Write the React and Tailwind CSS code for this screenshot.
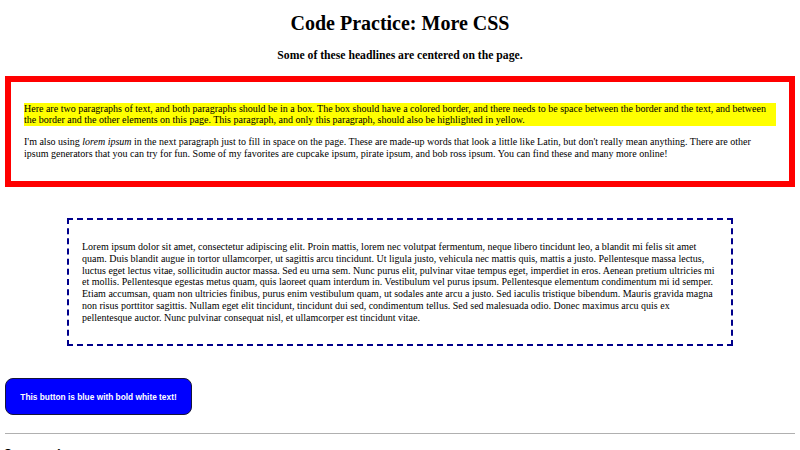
export default function App() {
  return (
    <div className="w-[800px] h-[450px] overflow-hidden bg-white text-black px-[5px] font-['Liberation_Serif',serif]">
      <h1 className="mt-[12px] text-center text-[20px] leading-[23px] font-bold">Code Practice: More CSS</h1>
      <h3 className="mt-[14px] text-center text-[11.7px] leading-[13.5px] font-bold">Some of these headlines are centered on the page.</h3>

      <div className="mt-[13px] border-[6px] border-[#ff0000] px-[13px] pt-[21px] pb-[22px] flex flex-col gap-[10px] text-[10px] leading-[11.7px]">
        <p className="bg-[#ffff00]">
          Here are two paragraphs of text, and both paragraphs should be in a box. The box should have a colored border, and there needs to be space between the border and the text, and between the border and the other elements on this page. This paragraph, and only this paragraph, should also be highlighted in yellow.
        </p>
        <p>
          I'm also using <em>lorem ipsum</em> in the next paragraph just to fill in space on the page. These are made-up words that look a little like Latin, but don't really mean anything. There are other ipsum generators that you can try for fun. Some of my favorites are cupcake ipsum, pirate ipsum, and bob ross ipsum. You can find these and many more online!
        </p>
      </div>

      <div className="mt-[31px] mx-[62px] border-2 border-dashed border-[#00008b] px-[13px] py-[21px] text-[10px] leading-[11.7px]">
        <p>
          Lorem ipsum dolor sit amet, consectetur adipiscing elit. Proin mattis, lorem nec volutpat fermentum, neque libero tincidunt leo, a blandit mi felis sit amet quam. Duis blandit augue in tortor ullamcorper, ut sagittis arcu tincidunt. Ut ligula justo, vehicula nec mattis quis, mattis a justo. Pellentesque massa lectus, luctus eget lectus vitae, sollicitudin auctor massa. Sed eu urna sem. Nunc purus elit, pulvinar vitae tempus eget, imperdiet in eros. Aenean pretium ultricies mi et mollis. Pellentesque egestas metus quam, quis laoreet quam interdum in. Vestibulum vel purus ipsum. Pellentesque elementum condimentum mi id semper. Etiam accumsan, quam non ultricies finibus, purus enim vestibulum quam, ut sodales ante arcu a justo. Sed iaculis tristique bibendum. Mauris gravida magna non risus porttitor sagittis. Nullam eget elit tincidunt, tincidunt dui sed, condimentum tellus. Sed sed malesuada odio. Donec maximus arcu quis ex pellentesque auctor. Nunc pulvinar consequat nisl, et ullamcorper est tincidunt vitae.
        </p>
      </div>

      <button className="mt-[32px] block w-[187px] h-[37px] rounded-[8px] border border-[#15153a] bg-[#0000ff] text-white font-bold text-[8.33px] leading-[10px] font-['Liberation_Sans',sans-serif]">
        This button is blue with bold white text!
      </button>

      <hr className="mt-[18px] border-t border-[#b0b0b0]" />

      <h2 className="mt-[12px] text-[15px] leading-[17.25px] font-bold">Instructions</h2>
    </div>
  );
}
